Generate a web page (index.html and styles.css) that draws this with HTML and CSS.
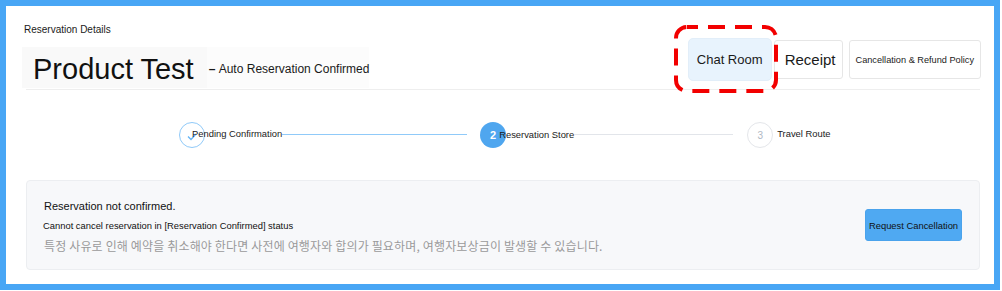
FILE: index.html
```html
<!DOCTYPE html>
<html lang="en">
<head>
  <meta charset="UTF-8" />
  <title>Reservation Details</title>
  <link rel="stylesheet" href="styles.css">
</head>
<body>
  <div class="frame">
    <header class="head">
      <div class="head-left">
        <p class="crumb">Reservation Details</p>
        <div class="title-row">
          <h1 class="title">Product Test</h1>
          <span class="status"><b>–</b>&nbsp;Auto Reservation Confirmed</span>
        </div>
      </div>
      <div class="actions">
        <button class="btn btn-chat">Chat Room</button>
        <button class="btn btn-receipt">Receipt</button>
        <button class="btn btn-policy">Cancellation &amp; Refund Policy</button>
        <svg class="highlight" width="104" height="68" viewBox="0 0 104 68">
          <rect x="2" y="2" width="100" height="64" rx="11" ry="11" fill="none" stroke="#f20000" stroke-width="4" stroke-dasharray="17 10" stroke-dashoffset="6" />
        </svg>
      </div>
    </header>

    <div class="steps">
      <span class="dot dot-done">
        <svg width="10" height="8" viewBox="0 0 10 8"><path d="M1 3.5 L4 6.5 L9 1" fill="none" stroke="#64b5f6" stroke-width="1.3" /></svg>
      </span>
      <span class="step-label step-label-1">Pending Confirmation</span>
      <span class="line line-done"></span>
      <span class="dot dot-active">2</span>
      <span class="step-label step-label-2">Reservation Store</span>
      <span class="line line-todo"></span>
      <span class="dot dot-todo">3</span>
      <span class="step-label step-label-3">Travel Route</span>
    </div>

    <div class="notice">
      <div class="notice-text">
        <p class="notice-title">Reservation not confirmed.</p>
        <p class="notice-sub">Cannot cancel reservation in [Reservation Confirmed] status</p>
        <p class="notice-ko">특정 사유로 인해 예약을 취소해야 한다면 사전에 여행자와 합의가 필요하며, 여행자보상금이 발생할 수 있습니다.</p>
      </div>
      <button class="btn btn-cancel">Request Cancellation</button>
    </div>
  </div>
</body>
</html>
```

FILE: styles.css
```css
body {
  margin: 0;
  background: #fff;
  font-family: "Liberation Sans", Arial, sans-serif;
  color: #1a1a1a;
}
.frame {
  width: 1000px;
  height: 290px;
  box-sizing: border-box;
  border: 6px solid #48a6f5;
  padding: 0 13px 0 20px;
  background: #fff;
}
.head {
  display: flex;
  justify-content: space-between;
  height: 84px;
  box-sizing: border-box;
  border-bottom: 1px solid #eeeeee;
  margin-right: 1px;
}
.crumb {
  margin: 0 0 0 -2px;
  padding-top: 18px;
  font-size: 10px;
  line-height: 12px;
}
.title-row {
  display: flex;
  margin: 11px 0 0 -4px;
  height: 41px;
}
.title {
  margin: 0;
  padding: 4px 13px 0 11px;
  font-size: 29px;
  font-weight: normal;
  line-height: 37px;
  background: #f9f9f9;
  color: #111;
}
.status {
  display: flex;
  align-items: center;
  padding: 3px 0 0 2px;
  font-size: 12px;
  background: #fcfcfc;
}
.status b {
  font-size: 12px;
}
.actions {
  position: relative;
  display: flex;
  align-items: center;
  align-self: flex-start;
  margin-top: 32px;
  margin-right: -1px;
}
.btn {
  font-family: "Liberation Sans", Arial, sans-serif;
  color: #1a1a1a;
  background: #fff;
  border: 1px solid #e6e6e6;
  border-radius: 3px;
  cursor: pointer;
}
.btn-chat {
  width: 84px;
  height: 43px;
  padding: 0;
  font-size: 13px;
  background: #e8f3fd;
  border-color: #e2eef9;
  border-radius: 5px;
}
.btn-receipt {
  height: 39px;
  margin-left: 2px;
  padding: 0 6px 0 10px;
  font-size: 15px;
}
.btn-policy {
  height: 39px;
  margin-left: 6px;
  padding: 0 6px;
  font-size: 9.2px;
}
.highlight {
  position: absolute;
  left: -14px;
  top: -13px;
  pointer-events: none;
}
.steps {
  display: flex;
  align-items: center;
  margin: 32px 0 0 153px;
}
.dot {
  flex: none;
  width: 26px;
  height: 26px;
  box-sizing: border-box;
  border-radius: 50%;
  display: flex;
  align-items: center;
  justify-content: center;
  font-size: 11px;
}
.dot-done {
  border: 1px solid #90caf9;
  background: #fff;
}
.dot-done svg {
  margin-top: 3px;
}
.dot-active {
  background: #4fa6ef;
  color: #fff;
  font-weight: bold;
}
.dot-todo {
  border: 1px solid #e4e6ea;
  color: #b0b8c4;
  font-size: 10px;
}
.step-label {
  font-size: 9.4px;
  line-height: 12px;
  color: #1a1a1a;
}
.step-label-1 { margin-left: -13px; margin-top: -3px; }
.step-label-2 { margin-left: -7px; }
.step-label-3 { margin-left: 4px; margin-top: -3px; }
.line {
  flex: none;
  height: 1px;
  margin-bottom: 1px;
}
.line-done {
  width: 185px;
  margin-right: 13px;
  background: #90caf9;
}
.line-todo {
  width: 159px;
  margin-right: 14px;
  background: #e2e5ea;
}
.notice {
  display: flex;
  align-items: center;
  justify-content: space-between;
  margin-top: 32px;
  height: 90px;
  box-sizing: border-box;
  padding: 3px 17px 0 17px;
  margin-right: 1px;
  background: #f7f8fa;
  border: 1px solid #eceef1;
  border-radius: 4px;
}
.notice-text p {
  margin: 0;
}
.notice-title {
  font-size: 11px;
  line-height: 16px;
  color: #111;
}
.notice-sub {
  margin-top: 4px !important;
  margin-left: -1px !important;
  font-size: 9.4px;
  line-height: 16px;
  color: #111;
}
.notice-ko {
  margin-top: 3px !important;
  font-family: "Noto Sans CJK KR", "Liberation Sans", sans-serif;
  font-size: 12px;
  letter-spacing: 0.15px;
  line-height: 18px;
  color: #9a9a9a;
}
.btn-cancel {
  width: 97px;
  height: 32px;
  margin-top: -3px;
  padding: 0;
  font-size: 9.4px;
  background: #4fa9f2;
  border-color: #4aa3ec;
  color: #111;
}
```
